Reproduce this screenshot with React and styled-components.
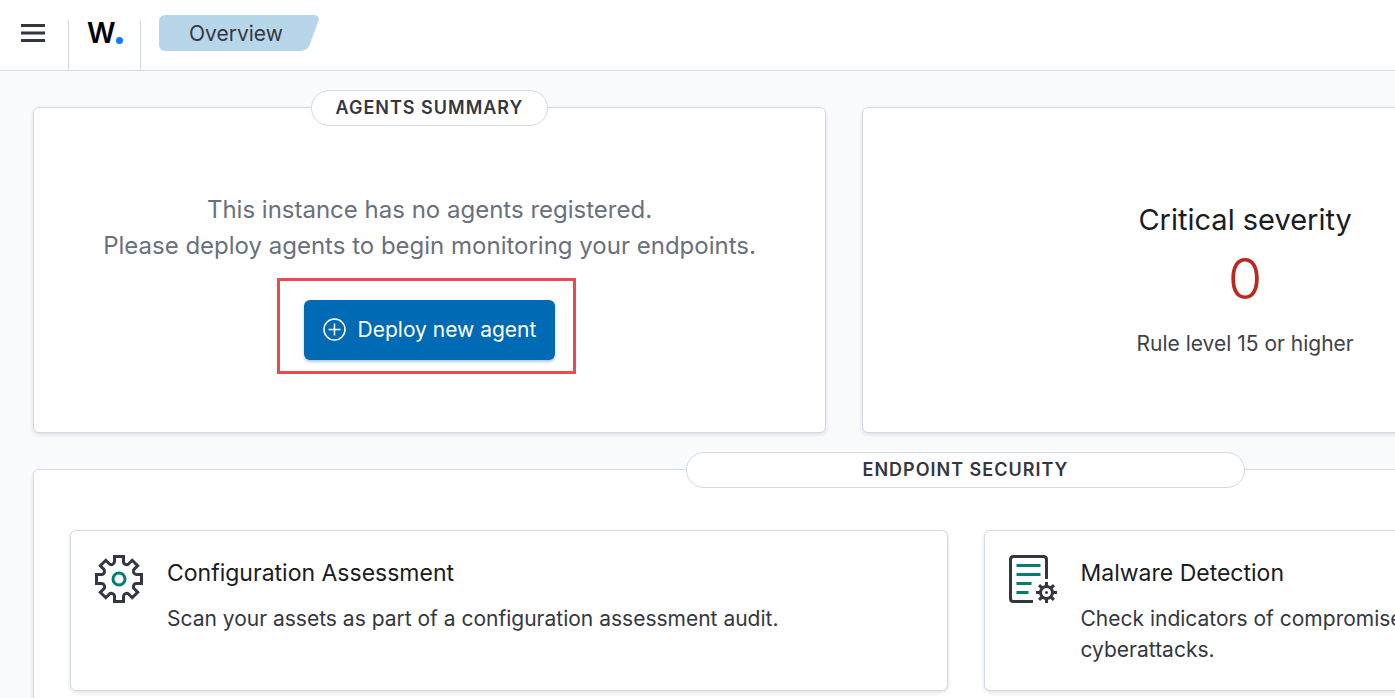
import React from "react";
import styled, { createGlobalStyle } from "styled-components";

const GlobalStyle = createGlobalStyle`
  *, *::before, *::after { box-sizing: border-box; }
  html, body { overflow: hidden; }
  body {
    margin: 0;
    background: #fafbfd;
    color: #343741;
    font-family: Inter, "Liberation Sans", sans-serif;
    font-size: 21px;
    line-height: 31px;
  }
  h2, h3, p { margin: 0; }
`;

const Shell = styled.div`
  overflow: hidden;
  height: 100vh;
`;

const Header = styled.header`
  display: flex;
  align-items: flex-start;
  height: 71px;
  background: #fff;
  border-bottom: 1px solid #d3dae6;
`;

const MenuButton = styled.button`
  display: flex;
  width: 68px;
  height: 66px;
  padding: 0 0 0 20px;
  align-items: center;
  border: 0;
  background: none;
  cursor: pointer;
`;

const LogoLink = styled.a`
  display: flex;
  width: 73px;
  height: 50px;
  margin-top: 20px;
  padding: 0 0 24px 18px;
  align-items: center;
  border: solid #d3dae6;
  border-width: 0 1px;
  color: #000;
  font-size: 28px;
  font-weight: 600;
  text-decoration: none;
`;

const LogoDot = styled.span`
  align-self: flex-end;
  width: 7px;
  height: 7px;
  margin-bottom: 2px;
  border-radius: 50%;
  background: #0a7cff;
`;

const Breadcrumb = styled.a`
  position: relative;
  isolation: isolate;
  height: 36px;
  margin: 15px 0 0 18px;
  padding: 0 31px 0 30px;
  color: #343741;
  line-height: 37px;
  text-decoration: none;

  &::before,
  &::after {
    content: "";
    position: absolute;
    z-index: -1;
    top: 0;
    bottom: 0;
    background: #b8d6ea;
  }
  &::before {
    left: 0;
    right: 24px;
    border-radius: 6px 0 0 6px;
  }
  &::after {
    right: 0;
    width: 60px;
    border-radius: 0 6px 6px 0;
    transform: skewX(-20deg);
  }
`;

const Main = styled.main`
  display: grid;
  gap: 36px;
  margin-right: -536px;
  padding: 36px 33px;
`;

const SummaryRow = styled.div`
  display: grid;
  grid-template-columns: 793fr 1036fr;
  gap: 36px;
`;

const Panel = styled.section`
  background: #fff;
  border: 1px solid #d3dae6;
  border-radius: 6px;
  box-shadow: 0 1px 4px -1px rgba(0, 0, 0, 0.12), 0 3px 6px -1px rgba(50, 50, 93, 0.08);
`;

const AgentsPanel = styled(Panel)`
  display: flex;
  flex-direction: column;
  align-items: center;
  padding-bottom: 72px;
`;

const PanelTitle = styled.h2`
  width: ${(p) => (p.$wide ? "30%" : "max-content")};
  height: 36px;
  margin: -18px auto 0;
  padding: 0 24px;
  border: 1px solid #d3dae6;
  border-radius: 18px;
  background: #fff;
  font-size: 18px;
  font-weight: 600;
  line-height: 34px;
  letter-spacing: 1px;
  text-align: center;
  text-transform: uppercase;
`;

const EmptyMessage = styled.p`
  margin: 66px 0 36px;
  color: #69707d;
  font-size: 24px;
  line-height: 36px;
  text-align: center;
`;

const Highlight = styled.div`
  position: relative;
  &::after {
    content: "";
    position: absolute;
    inset: -22px -21px -14px -27px;
    border: 3px solid #e94b50;
    pointer-events: none;
  }
`;

const DeployButton = styled.button`
  display: flex;
  height: 60px;
  padding: 0 19px 1px;
  align-items: center;
  gap: 12px;
  border: 0;
  border-radius: 6px;
  background: #006bb4;
  box-shadow: 0 2px 3px rgba(0, 80, 150, 0.3);
  color: #fff;
  font: inherit;
  cursor: pointer;
`;

const Severities = styled.div`
  display: grid;
  grid-template-columns: 17fr 6fr;
  padding-top: 89px;
`;

const Severity = styled.div`
  display: flex;
  flex-direction: column;
  align-items: center;
  color: #404249;
`;

const SeverityName = styled.h3`
  color: #1a1c21;
  font-size: 29px;
  font-weight: 400;
  line-height: 45px;
`;

const SeverityCount = styled.a`
  margin: 3px 0 15px;
  color: #bd271e;
  font-size: 56px;
  font-weight: 300;
  line-height: 68px;
  text-decoration: none;
`;

const Cards = styled.div`
  display: grid;
  grid-template-columns: 1fr 1fr;
  gap: 36px;
  padding: 42px 36px 36px;
`;

const Card = styled(Panel).attrs({ as: "article" })`
  display: flex;
  gap: 24px;
  padding: 24px 24px 25px;
`;

const CardIcon = styled.svg`
  flex: none;
  width: 48px;
  height: 48px;
`;

const CardTitle = styled.h3`
  margin-bottom: 12px;
  color: #1a1c21;
  font-size: 23px;
  font-weight: 400;
  line-height: 36px;
`;

function GearIcon() {
  return (
    <CardIcon viewBox="0 0 48 48" fill="none" strokeWidth="3" aria-hidden="true">
      <path
        stroke="#343741"
        d="M19.5 1.5h9v5.2q0 2 2 2.7t3.300-.6l3.400-3.500 5.500 5.500-3.500 3.400q-1.400 1.400-.6 3.300t2.700 2h5.200v9h-5.200q-2 0-2.700 2t.6 3.300l3.500 3.400-5.500 5.500-3.400-3.500q-1.400-1.400-3.300-.6t-2 2.700v5.200h-9v-5.200q0-2-2-2.700t-3.300.6l-3.400 3.500-5.500-5.500 3.500-3.400q1.400-1.400.6-3.300t-2.700-2H1.500v-9h5.200q2 0 2.700-2t-.6-3.300l-3.500-3.400 5.500-5.500 3.400 3.500q1.400 1.400 3.300.6t2-2.700z"
      />
      <circle cx="24" cy="24" r="6" stroke="#017d73" />
    </CardIcon>
  );
}

function DocumentGearIcon() {
  const teeth = [0, 45, 90, 135, 180, 225, 270, 315];
  return (
    <CardIcon viewBox="0 0 48 48" fill="none" strokeWidth="3" aria-hidden="true">
      <path stroke="#343741" d="M24 46.500H4.500q-3 0-3-3v-39q0-3 3-3h30q3 0 3 3V24" />
      <path stroke="#017d73" d="M7.500 10.500h24M7.500 19.500h24M7.500 28.500h15M7.500 37.500h12" />
      <g stroke="#343741">
        <circle cx="37.500" cy="37.500" r="6" />
        {teeth.map((a) => (
          <path key={a} d="M37.500 27v4" transform={`rotate(${a} 37.500 37.500)`} />
        ))}
      </g>
      <circle cx="37.500" cy="37.500" r="1.500" fill="#343741" stroke="none" />
    </CardIcon>
  );
}

const modules = [
  {
    title: "Configuration Assessment",
    text: "Scan your assets as part of a configuration assessment audit.",
    Icon: GearIcon,
  },
  {
    title: "Malware Detection",
    text: "Check indicators of compromise triggered by malware infections or cyberattacks.",
    Icon: DocumentGearIcon,
  },
];

export default function App() {
  return (
    <Shell>
      <GlobalStyle />
      <Header>
        <MenuButton type="button" aria-label="Toggle navigation">
          <svg width="26" height="20" viewBox="0 0 26 20" aria-hidden="true">
            <path d="M1 2.500h24M1 10h24M1 17.500h24" stroke="#343741" strokeWidth="3" />
          </svg>
        </MenuButton>
        <LogoLink href="#home" aria-label="Home">
          W<LogoDot />
        </LogoLink>
        <Breadcrumb href="#overview">Overview</Breadcrumb>
      </Header>
      <Main>
        <SummaryRow>
          <AgentsPanel>
            <PanelTitle>Agents summary</PanelTitle>
            <EmptyMessage>
              This instance has no agents registered.
              <br />
              Please deploy agents to begin monitoring your endpoints.
            </EmptyMessage>
            <Highlight>
              <DeployButton type="button">
                <svg width="23" height="23" viewBox="0 0 23 23" fill="none" stroke="#fff" strokeWidth="1.500" aria-hidden="true">
                  <circle cx="11.500" cy="11.500" r="10.500" />
                  <path d="M11.500 5.500v12M5.500 11.500h12" />
                </svg>
                Deploy new agent
              </DeployButton>
            </Highlight>
          </AgentsPanel>
          <Panel>
            <Severities>
              <Severity>
                <SeverityName>Critical severity</SeverityName>
                <SeverityCount href="#critical">0</SeverityCount>
                <p>Rule level 15 or higher</p>
              </Severity>
            </Severities>
          </Panel>
        </SummaryRow>
        <Panel>
          <PanelTitle $wide>Endpoint security</PanelTitle>
          <Cards>
            {modules.map(({ title, text, Icon }) => (
              <Card key={title}>
                <Icon />
                <div>
                  <CardTitle>{title}</CardTitle>
                  <p>{text}</p>
                </div>
              </Card>
            ))}
          </Cards>
        </Panel>
      </Main>
    </Shell>
  );
}
